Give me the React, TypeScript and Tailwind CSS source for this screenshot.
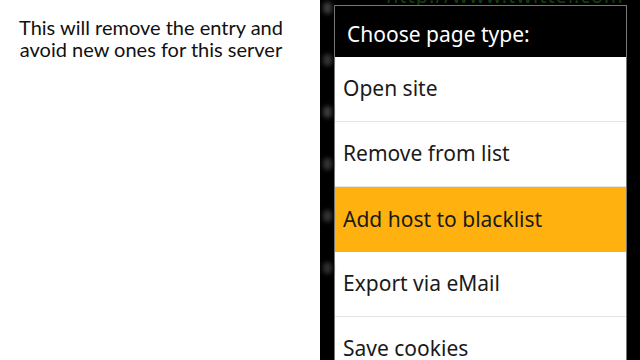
import React from "react";

const items = [
  { label: "Open site", active: false },
  { label: "Remove from list", active: false },
  { label: "Add host to blacklist", active: true },
  { label: "Export via eMail", active: false },
  { label: "Save cookies", active: false },
];

const blobs = ["#3a3a3a", "#333", "#3a3a3a", "#333", "#333", "#2e2e2e"];

export default function App() {
  return (
    <div className="flex w-[640px] h-[360px] overflow-hidden">
      <div
        className="w-[320px] shrink-0 bg-white pt-[16px] pr-[18px] text-center text-[20px] leading-[22px] text-[#111]"
        style={{ fontFamily: "Lato, 'Open Sans', sans-serif" }}
      >
        <div>This will remove the entry and</div>
        <div>avoid new ones for this server</div>
      </div>
      <div
        className="flex-1 flex bg-black overflow-hidden"
        style={{ fontFamily: "'Noto Sans', 'Open Sans', sans-serif" }}
      >
        <div className="w-[14px] shrink-0 flex flex-col items-center gap-[40px] pt-[2px]">
          {blobs.map((c, i) => (
            <div key={i} className="w-[9px] h-[12px] shrink-0 rounded-full blur-[2px]" style={{ background: c }} />
          ))}
        </div>
        <div className="flex flex-col shrink-0">
          <div className="h-[5px] shrink-0 overflow-hidden pl-[52px]">
            <div className="-mt-[14px] text-[20px] tracking-[1px] leading-[20px] text-[#163d12] whitespace-nowrap">
              http://www.twitter.com
            </div>
          </div>
          <div className="w-[293px] shrink-0 border border-[#777] bg-black">
            <div className="h-[51px] flex items-center pl-[12px] pt-[6px] text-[21px] text-white">
              Choose page type:
            </div>
            {items.map((it) => (
              <div
                key={it.label}
                className={
                  it.active
                    ? "h-[65px] flex items-center pl-[8px] text-[21px] text-[#1a1a1a] bg-[#ffb20f]"
                    : "h-[65px] flex items-center pl-[8px] text-[21px] text-[#1a1a1a] bg-white border-b border-[#e4e4e4]"
                }
              >
                {it.label}
              </div>
            ))}
          </div>
        </div>
      </div>
    </div>
  );
}
